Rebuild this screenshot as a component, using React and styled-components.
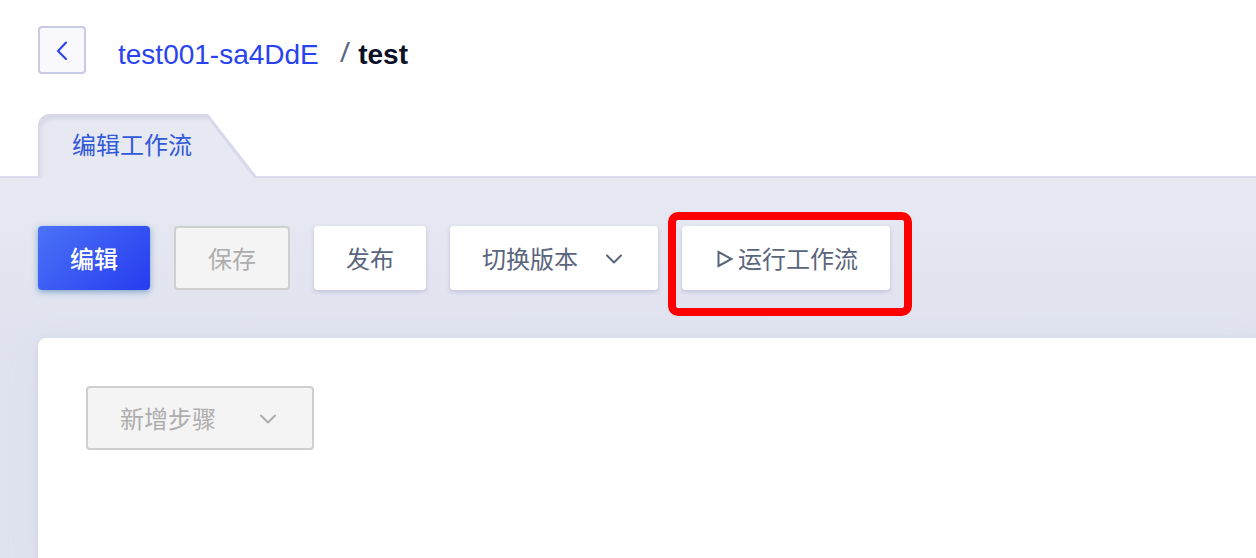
import React from 'react';
import styled, { createGlobalStyle, css } from 'styled-components';

const GlobalStyle = createGlobalStyle`
  *, *::before, *::after { box-sizing: border-box; }
  body {
    margin: 0;
    background: #fff;
    font-family: "Liberation Sans", "Noto Sans CJK SC", sans-serif;
  }
  button { font-family: inherit; }
`;

const Page = styled.div`
  display: flex;
  flex-direction: column;
  min-height: 100vh;
  overflow-x: hidden;
`;

const Header = styled.header`
  display: flex;
  align-items: center;
  gap: 32px;
  padding: 26px 38px 0;
`;

const BackButton = styled.button`
  display: flex;
  align-items: center;
  justify-content: center;
  width: 48px;
  height: 48px;
  padding: 0;
  border: 2px solid #c8cae6;
  border-radius: 4px;
  background: #f9f9fd;
  color: #2a41ef;
`;

const Breadcrumb = styled.nav`
  display: flex;
  align-items: baseline;
  padding-top: 10px;
  font-size: 28px;
  line-height: 32px;
`;

const CrumbLink = styled.a`
  color: #2943ee;
  text-decoration: none;
`;

const Separator = styled.span`
  align-self: flex-start;
  margin: 0 8px 0 21px;
  color: #5b687f;
  font-family: "Noto Sans", sans-serif;
  line-height: 24px;
`;

const CurrentCrumb = styled.h1`
  margin: 0;
  color: #0b1026;
  font-size: 28px;
  line-height: 32px;
`;

const Tabs = styled.div`
  display: flex;
  margin-top: 40px;
  padding-left: 38px;
  box-shadow: inset 0 -2px #d8d9ec;
`;

const TabShape = styled.div`
  position: relative;

  &::before {
    content: "";
    position: absolute;
    top: 0;
    right: 0;
    width: 54px;
    height: 64px;
    border-right: 4px solid #d8d9ec;
    background: #e6e8f2;
    transform: skewX(38deg);
    transform-origin: top right;
  }
`;

const Tab = styled.button`
  position: relative;
  display: block;
  width: 170px;
  height: 64px;
  padding: 0 0 0 34px;
  border: 0;
  border-radius: 12px 0 0 0;
  background: #e6e8f2;
  box-shadow: inset 2px 4px 0 #d8daea, inset 4px 6px 3px #dcdeea;
  color: #3159d8;
  font-size: 24px;
  line-height: 32px;
  text-align: left;
`;

const Workspace = styled.main`
  display: flex;
  flex: 1;
  flex-direction: column;
  gap: 48px;
  padding: 48px 0 0 38px;
  background: linear-gradient(#e6e8f2, #e0e2ef 160px);
`;

const Toolbar = styled.div`
  display: flex;
  gap: 24px;
`;

const variants = {
  primary: css`
    background: linear-gradient(135deg, #4b72f7, #263cef);
    box-shadow: 0 2px 6px #7fa5c9;
    color: #fff;
    font-weight: 500;
  `,
  plain: css`
    background: #fff;
    box-shadow: 0 2px 4px #c0c3dc;
    color: #59657c;
  `,
  muted: css`
    border: 2px solid #cfcfcf;
    background: #f4f4f4;
    color: #adadad;
  `,
};

const Button = styled.button`
  display: flex;
  align-items: center;
  height: 64px;
  padding: 4px 32px 0;
  border: 0;
  border-radius: 4px;
  font-size: 24px;
  line-height: 32px;
  white-space: nowrap;
  ${({ $variant }) => variants[$variant]}
`;

const MenuButton = styled(Button)`
  gap: ${({ $gap }) => $gap}px;
  padding-right: 34px;
`;

const RunButton = styled(Button)`
  gap: 4px;
`;

const Highlight = styled.div`
  position: relative;

  &::after {
    content: "";
    position: absolute;
    inset: -14px -22px -26px -14px;
    border: 8px solid #f00;
    border-radius: 10px;
    pointer-events: none;
  }
`;

const Panel = styled.section`
  flex: 1;
  padding: 48px;
  border-radius: 8px 0 0 0;
  background: #fff;
  box-shadow: 0 2px 6px #c9cce6, 0 16px 40px #d9e0ec;
`;

const Icon = styled.svg`
  display: block;
  flex: none;
  fill: none;
  stroke: currentColor;
  stroke-width: 2;
`;

const Chevron = () => (
  <Icon width="20" height="20" viewBox="0 0 20 20" strokeLinecap="round" strokeLinejoin="round" aria-hidden="true">
    <path d="M3 5.5 10 12.5 17 5.5" />
  </Icon>
);

export default function App() {
  return (
    <Page>
      <GlobalStyle />
      <Header>
        <BackButton type="button" aria-label="返回">
          <Icon width="20" height="20" viewBox="0 0 20 20" strokeLinecap="round" aria-hidden="true">
            <path d="M14 2.5 6 11 14 19" />
          </Icon>
        </BackButton>
        <Breadcrumb>
          <CrumbLink href="#">test001-sa4DdE</CrumbLink>
          <Separator>/</Separator>
          <CurrentCrumb>test</CurrentCrumb>
        </Breadcrumb>
      </Header>
      <Tabs role="tablist">
        <TabShape role="presentation">
          <Tab type="button" role="tab" aria-selected="true">编辑工作流</Tab>
        </TabShape>
      </Tabs>
      <Workspace>
        <Toolbar>
          <Button type="button" $variant="primary">编辑</Button>
          <Button type="button" $variant="muted" disabled>保存</Button>
          <Button type="button" $variant="plain">发布</Button>
          <MenuButton type="button" $variant="plain" $gap={26} aria-haspopup="menu">
            切换版本
            <Chevron />
          </MenuButton>
          <Highlight>
            <RunButton type="button" $variant="plain">
              <Icon width="20" height="20" viewBox="0 0 20 20" aria-hidden="true">
                <path d="M4.5 2V16L17.5 9Z" />
              </Icon>
              运行工作流
            </RunButton>
          </Highlight>
        </Toolbar>
        <Panel>
          <MenuButton type="button" $variant="muted" $gap={42} disabled aria-haspopup="menu">
            新增步骤
            <Chevron />
          </MenuButton>
        </Panel>
      </Workspace>
    </Page>
  );
}
